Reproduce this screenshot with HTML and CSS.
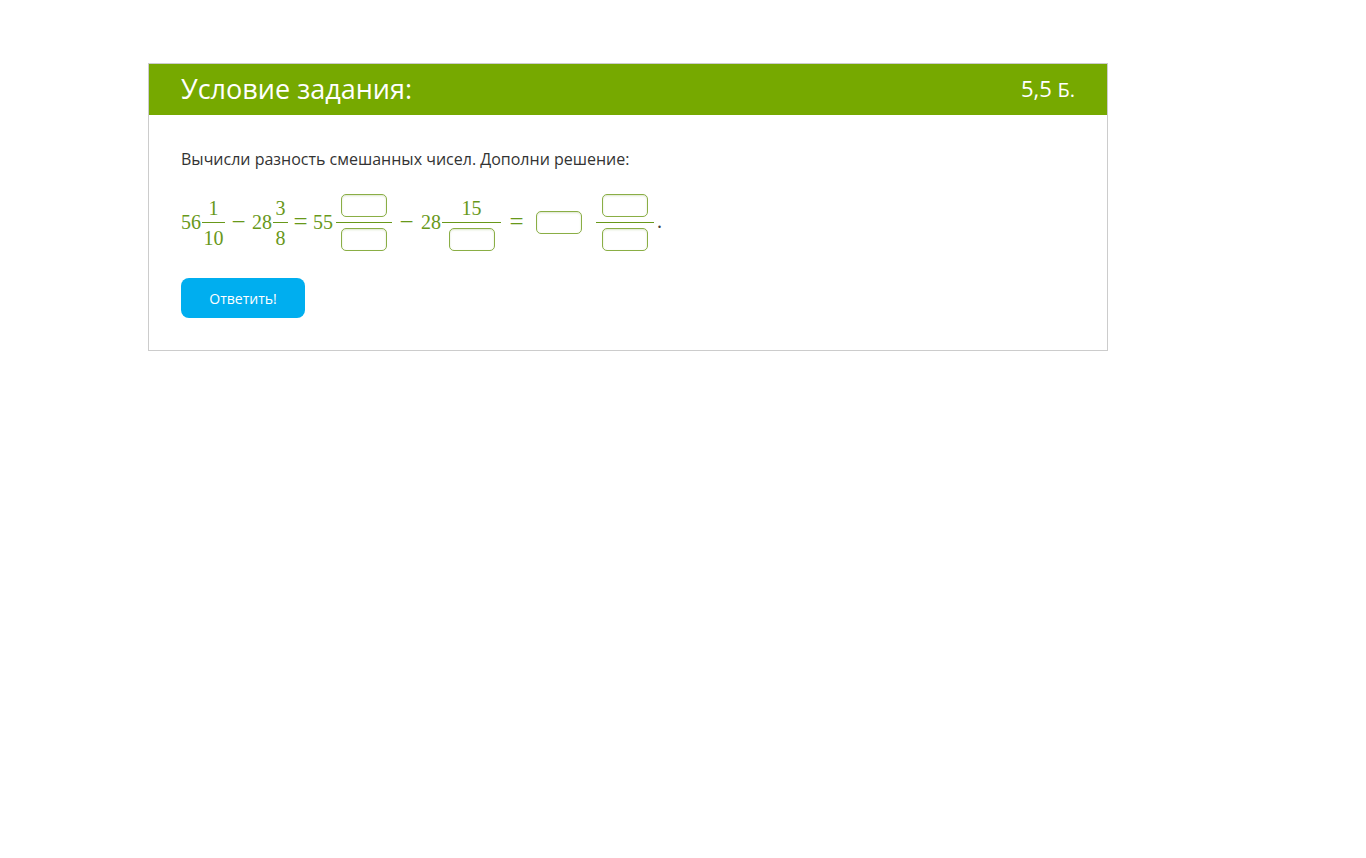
FILE: index.html
```html
<!DOCTYPE html>
<html lang="ru">
<head>
<meta charset="utf-8">
<title>Условие задания</title>
<link rel="stylesheet" href="styles.css">
</head>
<body>
<div class="card">
  <div class="card-head">
    <div class="title">Условие задания:</div>
    <div class="score">5,5 <span class="unit">Б.</span></div>
  </div>
  <div class="card-body">
    <p class="task">Вычисли разность смешанных чисел. Дополни решение:</p>
    <div class="math">
      <span class="num-t">56</span>
      <span class="frac fr-a">
        <span class="fn"><span class="ft">1</span></span>
        <span class="bar"></span>
        <span class="fd"><span class="ft">10</span></span>
      </span>
      <span class="op op-m1">−</span>
      <span class="num-t">28</span>
      <span class="frac fr-b">
        <span class="fn"><span class="ft">3</span></span>
        <span class="bar"></span>
        <span class="fd"><span class="ft">8</span></span>
      </span>
      <span class="op op-eq1">=</span>
      <span class="num-t">55</span>
      <span class="frac fr-box fr-d">
        <span class="fn"><input class="box" type="text"></span>
        <span class="bar"></span>
        <span class="fd"><input class="box" type="text"></span>
      </span>
      <span class="op op-m2">−</span>
      <span class="num-t">28</span>
      <span class="frac fr-c">
        <span class="fn"><span class="ft">15</span></span>
        <span class="bar"></span>
        <span class="fd"><input class="box" type="text"></span>
      </span>
      <span class="op op-eq2">=</span>
      <input class="box whole" type="text">
      <span class="frac fr-box fr-last">
        <span class="fn"><input class="box" type="text"></span>
        <span class="bar"></span>
        <span class="fd"><input class="box" type="text"></span>
      </span>
      <span class="dot">.</span>
    </div>
    <button class="btn" type="button">Ответить!</button>
  </div>
</div>
</body>
</html>
```

FILE: styles.css
```css
html, body {
  margin: 0;
  padding: 0;
  background: #ffffff;
}
body {
  font-family: "Open Sans", "Liberation Sans", sans-serif;
  color: #333333;
}
.card {
  margin: 63px 0 0 148px;
  width: 958px;
  border: 1px solid #cccccc;
  background: #ffffff;
}
.card-head {
  height: 51px;
  background: #76a900;
  display: flex;
  align-items: center;
  justify-content: space-between;
  padding: 0 32px;
  color: #ffffff;
}
.title {
  font-size: 27px;
  line-height: 30px;
  margin-top: -2px;
}
.score {
  font-size: 22px;
  line-height: 30px;
  margin-top: -2px;
}
.unit {
  font-size: 20px;
}
.card-body {
  padding: 33px 32px 32px 32px;
}
.task {
  margin: 0;
  font-size: 16px;
  line-height: 22px;
  color: #333333;
}
.math {
  margin-top: 22px;
  display: flex;
  align-items: center;
  font-family: "Liberation Serif", "Times New Roman", serif;
  font-size: 20px;
  color: #68981a;
  height: 60px;
}
.num-t {
  line-height: 20px;
  width: 20px;
  text-align: center;
}
.frac {
  display: inline-flex;
  flex-direction: column;
  align-items: stretch;
  margin-left: 1px;
}
.fn, .fd {
  height: 24px;
  display: flex;
  justify-content: center;
}
.fn { align-items: flex-end; }
.fd { align-items: flex-start; }
.ft {
  line-height: 20px;
  display: block;
}
.fn .ft { margin-bottom: -1px; }
.bar {
  height: 1px;
  background: #68981a;
  margin: 5px 0;
}
.fr-a { width: 23px; }
.fr-b { width: 15px; }
.fr-box { width: 56px; }
.fr-d { margin-left: 3px; }
.fr-c { width: 59px; }
.op {
  display: inline-block;
  text-align: center;
  font-size: 25px;
  line-height: 24px;
}
.op-m1 { width: 27px; }
.op-eq1 { width: 25px; }
.op-m2 { width: 29px; }
.op-eq2 { width: 31px; }
.box {
  box-sizing: border-box;
  width: 46px;
  height: 23px;
  border: 1px solid #8aae45;
  border-radius: 5px;
  background: #ffffff;
  box-shadow: inset 0 1px 2px rgba(120, 150, 60, 0.25);
  padding: 0;
  margin: 0;
  outline: none;
  flex: none;
}
.whole {
  margin-left: 4px;
}
.fr-last {
  margin-left: 14px;
  width: 58px;
}
.dot {
  line-height: 20px;
  margin-left: 3px;
  margin-top: -2px;
  color: #444;
}
.btn {
  display: block;
  margin-top: 26px;
  width: 124px;
  height: 40px;
  border: none;
  border-radius: 8px;
  background: #00aeef;
  color: #ffffff;
  font-family: "Open Sans", "Liberation Sans", sans-serif;
  font-size: 14px;
  padding: 0;
  cursor: pointer;
}
```
